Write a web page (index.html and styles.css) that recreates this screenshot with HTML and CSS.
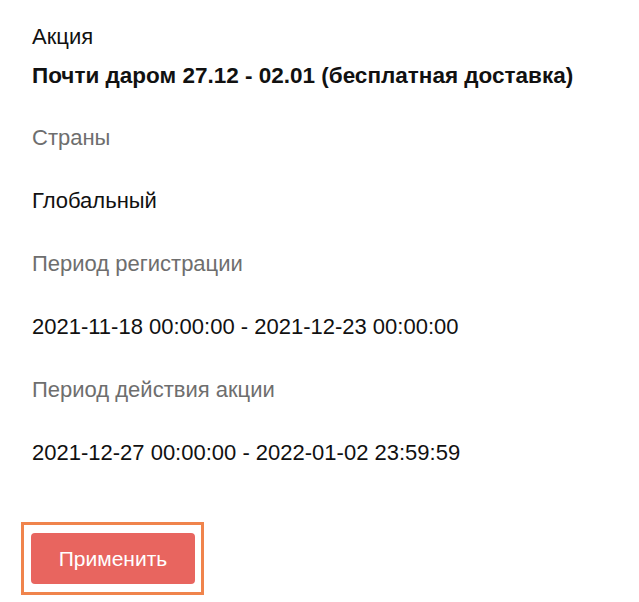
FILE: index.html
```html
<!DOCTYPE html>
<html lang="ru">
<head>
<meta charset="utf-8">
<title>Акция</title>
<link rel="stylesheet" href="styles.css">
</head>
<body>
<main class="page">
  <section class="promo">
    <div class="promo-caption">Акция</div>
    <div class="promo-title">Почти даром 27.12 - 02.01 (бесплатная доставка)</div>
  </section>
  <dl class="fields">
    <dt class="label">Страны</dt>
    <dd class="value">Глобальный</dd>
    <dt class="label">Период регистрации</dt>
    <dd class="value">2021-11-18 00:00:00 - 2021-12-23 00:00:00</dd>
    <dt class="label">Период действия акции</dt>
    <dd class="value">2021-12-27 00:00:00 - 2022-01-02 23:59:59</dd>
  </dl>
  <div class="actions">
    <div class="highlight">
      <button class="apply" type="button">Применить</button>
    </div>
  </div>
</main>
</body>
</html>
```
FILE: styles.css
```css
html, body {
  margin: 0;
  padding: 0;
  background: #ffffff;
}
body {
  font-family: "Liberation Sans", Arial, Helvetica, sans-serif;
  font-size: 22px;
  color: #111111;
}
.page {
  padding: 22px 32px 0 32px;
}
.promo-caption,
.promo-title,
.label,
.value {
  line-height: 29px;
}
.promo-title {
  font-weight: bold;
  font-size: 22.5px;
  margin-top: 10px;
}
.fields {
  margin: 33px 0 0 0;
  padding: 0;
}
.label {
  color: #6e6e6e;
  margin: 0 0 34px 0;
}
.value {
  color: #111111;
  margin: 0 0 34px 0;
}
.actions {
  margin-top: 55px;
  margin-left: -11px;
  display: flex;
}
.highlight {
  border: 3px solid #f0844c;
  padding: 8px 6px 8px 7px;
}
.apply {
  display: block;
  width: 164px;
  height: 51px;
  border: none;
  border-radius: 4px;
  background: #e8655f;
  color: #ffffff;
  font-family: "Liberation Sans", Arial, Helvetica, sans-serif;
  font-size: 21px;
  cursor: pointer;
}
```
